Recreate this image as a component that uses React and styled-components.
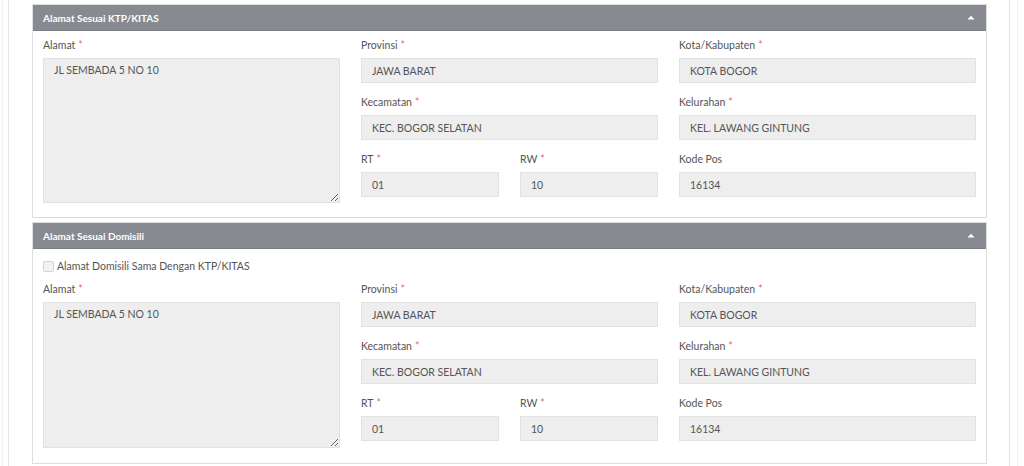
import React from "react";
import styled, { createGlobalStyle } from "styled-components";

const Global = createGlobalStyle`
  html, body { margin: 0; padding: 0; background: #fff; }
  body { font-family: Lato, "Open Sans", Arial, sans-serif; }
  * { box-sizing: border-box; }
`;

const Screen = styled.div`
  width: 1024px;
  height: 466px;
  overflow: hidden;
  padding: 0 6px 0 2px;
  background: #fff;
`;

const OuterRail = styled.div`
  height: 100%;
  border-left: 1px solid #f1f1f1;
  border-right: 1px solid #f1f1f1;
  padding: 0 7px 0 5px;
`;

const InnerRail = styled.div`
  height: 100%;
  border-left: 1px solid #e4e4e4;
  border-right: 1px solid #e4e4e4;
  padding: 4px 22px 0 23px;
`;

const Panel = styled.section`
  border: 1px solid #dedede;
  margin-bottom: 4px;
  background: #fff;
`;

const PanelHeader = styled.div`
  height: 26px;
  background: #878a90;
  border-bottom: 1px solid #7c7f85;
  display: flex;
  align-items: center;
  justify-content: space-between;
  padding: 0 10px 0 10px;
  color: #fff;
  font-size: 10px;
  font-weight: 700;
`;

const Caret = styled.svg`
  width: 8px;
  height: 5px;
  margin-right: 1px;
`;

const PanelBody = styled.div`
  padding: 7px 10px ${(p) => (p.$tall ? 15 : 14)}px 10px;
`;

const Columns = styled.div`
  display: grid;
  grid-template-columns: repeat(3, 1fr);
  column-gap: 21px;
  align-items: start;
`;

const Column = styled.div`
  display: flex;
  flex-direction: column;
  gap: 12px;
`;

const Pair = styled.div`
  display: grid;
  grid-template-columns: 1fr 1fr;
  column-gap: 21px;
`;

const Field = styled.div`
  display: flex;
  flex-direction: column;
`;

const Label = styled.label`
  font-size: 10.5px;
  line-height: 15px;
  height: 15px;
  margin-bottom: 5px;
  color: #555;
`;

const Req = styled.span`
  color: #e0706f;
  margin-left: 3px;
`;

const Input = styled.input`
  height: 25px;
  width: 100%;
  border: 1px solid #e2e2e2;
  background: #eeeeee;
  color: #555;
  font-family: inherit;
  font-size: 10.5px;
  padding: 0 10px;
  outline: none;
  border-radius: 0;
`;

const Area = styled.textarea`
  height: ${(p) => (p.$tall ? 146 : 145)}px;
  width: 100%;
  border: 1px solid #e2e2e2;
  background: #eeeeee;
  color: #555;
  font-family: inherit;
  font-size: 10.5px;
  line-height: 15px;
  padding: 4px 10px;
  outline: none;
  resize: vertical;
  border-radius: 0;
  display: block;
`;

const CheckRow = styled.label`
  display: flex;
  align-items: center;
  height: 20px;
  margin-bottom: 6px;
  font-size: 10.5px;
  color: #555;
  gap: 3px;
`;

const Check = styled.input`
  appearance: none;
  -webkit-appearance: none;
  width: 11px;
  height: 11px;
  margin: 0;
  border: 1px solid #d3d3d3;
  border-radius: 2px;
  background: #f2f2f2;
`;

function TextField({ label, value, required }) {
  return (
    <Field>
      <Label>
        {label}
        {required && <Req>*</Req>}
      </Label>
      <Input readOnly value={value} />
    </Field>
  );
}

function AddressPanel({ title, withCheck }) {
  return (
    <Panel>
      <PanelHeader>
        <span>{title}</span>
        <Caret viewBox="0 0 8 5">
          <path d="M0.5 4.5 L4 0.8 L7.5 4.5 Z" fill="#fff" />
        </Caret>
      </PanelHeader>
      <PanelBody $tall={withCheck}>
        {withCheck && (
          <CheckRow>
            <Check type="checkbox" readOnly />
            Alamat Domisili Sama Dengan KTP/KITAS
          </CheckRow>
        )}
        <Columns>
          <Column>
            <Field>
              <Label>
                Alamat<Req>*</Req>
              </Label>
              <Area readOnly $tall={withCheck} value="JL SEMBADA 5 NO 10" />
            </Field>
          </Column>
          <Column>
            <TextField label="Provinsi" value="JAWA BARAT" required />
            <TextField label="Kecamatan" value="KEC. BOGOR SELATAN" required />
            <Pair>
              <TextField label="RT" value="01" required />
              <TextField label="RW" value="10" required />
            </Pair>
          </Column>
          <Column>
            <TextField label="Kota/Kabupaten" value="KOTA BOGOR" required />
            <TextField label="Kelurahan" value="KEL. LAWANG GINTUNG" required />
            <TextField label="Kode Pos" value="16134" />
          </Column>
        </Columns>
      </PanelBody>
    </Panel>
  );
}

export default function App() {
  return (
    <>
      <Global />
      <Screen>
        <OuterRail>
          <InnerRail>
            <AddressPanel title="Alamat Sesuai KTP/KITAS" />
            <AddressPanel title="Alamat Sesuai Domisili" withCheck />
          </InnerRail>
        </OuterRail>
      </Screen>
    </>
  );
}
